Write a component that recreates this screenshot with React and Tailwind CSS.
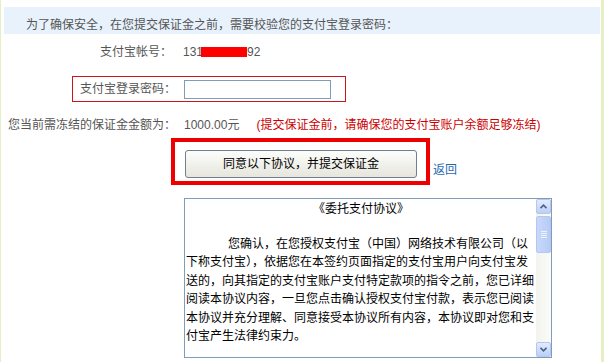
import React from 'react';

const lines = [
  '下称支付宝），依据您在本签约页面指定的支付宝用户向支付宝发',
  '送的，向其指定的支付宝账户支付特定款项的指令之前，您已详细',
  '阅读本协议内容，一旦您点击确认授权支付宝付款，表示您已阅读',
  '本协议并充分理解、同意接受本协议所有内容，本协议即对您和支',
  '付宝产生法律约束力。',
];

// XP style scroll buttons
const ScrollButton = ({ down }) => (
  <div className="flex h-[15px] w-[15px] items-center justify-center rounded-[2px] border border-[#b5c7ee] bg-gradient-to-b from-[#e3ecfe] to-[#bccff8]">
    <svg width="7" height="5" viewBox="0 0 7 5">
      <path
        d={down ? 'M0.5 0.8 L3.5 3.8 L6.5 0.8' : 'M0.5 4.2 L3.5 1.2 L6.5 4.2'}
        fill="none"
        stroke="#4d6185"
        strokeWidth="1.6"
      />
    </svg>
  </div>
);

const App = () => {
  return (
    <div className="flex h-[362px] w-[604px] overflow-hidden bg-white text-[12px] leading-[14px] font-['Liberation_Sans','Noto_Sans_CJK_SC',sans-serif]">
      <div className="w-[1px] bg-[#e4efc6]" />

      <div className="flex-1 pl-[3px] pr-[1px]">
        {/* tip bar */}
        <div className="mt-[7px] h-[27px] bg-[#e8f2fd] pl-[22px] pt-[11px] text-[#555]">
          为了确保安全，在您提交保证金之前，需要校验您的支付宝登录密码：
        </div>

        {/* account */}
        <div className="mt-[11px] flex h-[14px] items-center text-[#555]">
          <div className="w-[168px] text-right">支付宝帐号：</div>
          <div className="ml-[11px] flex items-center">
            <span>131</span>
            <span className="-ml-[2px] inline-block h-[10px] w-[46px] bg-[#ff0000]" />
            <span>92</span>
          </div>
        </div>

        {/* password */}
        <div className="ml-[68px] mt-[17px] flex h-[26px] w-[274px] items-center border border-[#c8161d] pl-[7px] text-[#555]">
          <label htmlFor="pwd">支付宝登录密码：</label>
          <input
            id="pwd"
            type="password"
            className="ml-[8px] h-[19px] w-[147px] border border-[#7f9db9] bg-white outline-none"
          />
        </div>

        {/* amount */}
        <div className="mt-[16px] flex h-[14px] items-center pl-[4px] text-[#555]">
          <span>您当前需冻结的保证金金额为：</span>
          <span className="ml-[8px]">1000.00元</span>
          <span className="ml-[17px] text-[#cc0000]">(提交保证金前，请确保您的支付宝账户余额足够冻结)</span>
        </div>

        {/* submit */}
        <div className="mt-[6px] flex items-end">
          <div className="ml-[167px] h-[47px] w-[259px] border-4 border-[#ee0000] pl-[10px] pt-[8px]">
            <button
              type="button"
              className="h-[28px] w-[232px] rounded-[3px] border border-[#6f7f92] bg-gradient-to-b from-[#fdfdfb] to-[#e6e6de] text-black"
            >
              同意以下协议，并提交保证金
            </button>
          </div>
          <a href="#" className="mb-[8px] ml-[3px] text-[#1f68b3]">返回</a>
        </div>

        {/* agreement */}
        <div className="ml-[180px] mt-[13px] flex h-[160px] w-[368px] border border-[#7f9db9]">
          <div className="flex-1 overflow-hidden whitespace-nowrap pl-[1px] text-black">
            <div className="pt-[1px] text-center leading-[18px]">《委托支付协议》</div>
            <div className="mt-[17px] leading-[18.4px]">
              <div className="pl-[42px]">您确认，在您授权支付宝（中国）网络技术有限公司（以</div>
              {lines.map((l) => (
                <div key={l}>{l}</div>
              ))}
            </div>
          </div>
          <div className="flex w-[15px] flex-col bg-gradient-to-r from-[#f3f3ee] to-[#fbfbf8]">
            <ScrollButton />
            <div className="mt-[2px] flex h-[37px] w-[15px] items-center justify-center rounded-[2px] border border-[#b5c7ee] bg-gradient-to-r from-[#c8d8fb] to-[#b6cbf7]">
              <div className="flex flex-col gap-[1px]">
                <div className="h-[1px] w-[6px] bg-[#eef3fe]" />
                <div className="h-[1px] w-[6px] bg-[#eef3fe]" />
                <div className="h-[1px] w-[6px] bg-[#eef3fe]" />
                <div className="h-[1px] w-[6px] bg-[#eef3fe]" />
              </div>
            </div>
            <div className="flex-1" />
            <ScrollButton down />
          </div>
        </div>
      </div>

      <div className="w-[3px] bg-[#e4efc6]" />
    </div>
  );
};

export default App;
